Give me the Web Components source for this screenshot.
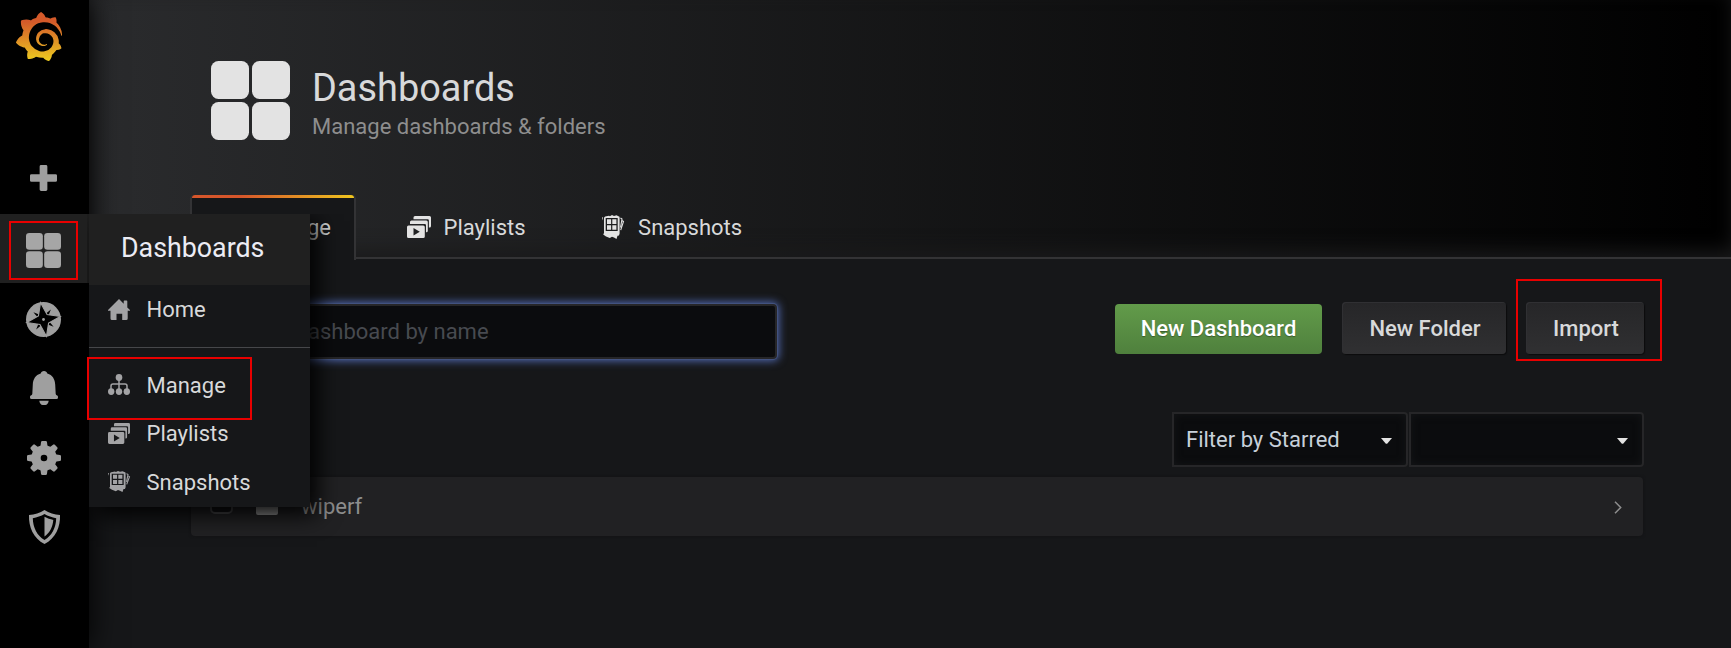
<!DOCTYPE html>
<html lang="en">
<head>
<meta charset="utf-8">
<title>Dashboards</title>
<style>
html,body{margin:0;height:100%;background:#161719;overflow:hidden}
body{font:22px/1.5 Roboto,sans-serif;color:#d8d9da}
</style>
</head>
<body>
<app-shell></app-shell>
<script>
const define=(name,html)=>{
  const t=document.createElement('template');t.innerHTML=html;
  customElements.define(name,class extends HTMLElement{
    connectedCallback(){
      if(this.shadowRoot)return;
      this.attachShadow({mode:'open'}).append(t.content.cloneNode(true));
    }
  });
};

const poly=(n,f)=>Array.from({length:n},(_,i)=>f(i).map(v=>v.toFixed(2)).join(',')).join(' ');
const polar=(c,r,a)=>[c+r*Math.sin(a*Math.PI/180),c-r*Math.cos(a*Math.PI/180)];
const star=(r,s,rot)=>poly(8,i=>polar(17.5,i%2?s:r,i*45+rot));
const teeth=Array.from({length:8},(_,i)=>`<path transform="rotate(${i*45} 17 17)" d="M11.500 7 13.600 4.600 14 1.200Q14.100 0 15.300 0h3.400q1.200 0 1.300 1.200l.4 3.400L22.500 7z"/>`).join('');
const grafana="M23.02 10.59a8.578 8.578 0 0 0-.862-3.034 8.911 8.911 0 0 0-1.789-2.445c.337-1.342-.413-2.505-.413-2.505-1.292-.08-2.113.4-2.416.62-.052-.02-.102-.044-.154-.064-.22-.089-.446-.172-.677-.247-.231-.073-.47-.14-.711-.197a9.867 9.867 0 0 0-.875-.161C14.557.753 12.94 0 12.94 0c-1.804 1.145-2.147 2.744-2.147 2.744l-.018.093c-.098.029-.2.057-.298.088-.138.042-.275.094-.413.143-.138.055-.275.107-.41.166a8.869 8.869 0 0 0-1.557.87l-.063-.029c-2.497-.955-4.716.195-4.716.195-.203 2.658.996 4.33 1.235 4.636a11.608 11.608 0 0 0-.607 2.635C1.636 12.677.953 15.014.953 15.014c1.926 2.214 4.171 2.351 4.171 2.351.003-.002.006-.002.006-.005.285.509.615.994.986 1.446.156.19.32.371.488.548-.704 2.009.099 3.68.099 3.68 2.144.08 3.553-.937 3.849-1.173a9.784 9.784 0 0 0 3.164.501h.08l.055-.003.107-.002.103-.005.003.002c1.01 1.44 2.788 1.646 2.788 1.646 1.264-1.332 1.337-2.653 1.337-2.94v-.058c0-.02-.003-.039-.003-.06.265-.187.52-.387.758-.6a7.875 7.875 0 0 0 1.415-1.7c1.43.083 2.437-.885 2.437-.885-.236-1.49-1.085-2.216-1.264-2.354l-.018-.013-.016-.013a.217.217 0 0 1-.031-.02c.008-.092.016-.18.02-.27.011-.162.016-.323.016-.48v-.253l-.005-.098-.008-.135a1.891 1.891 0 0 0-.01-.13c-.003-.042-.008-.083-.013-.125l-.016-.124-.018-.122a6.215 6.215 0 0 0-2.032-3.73 6.015 6.015 0 0 0-3.222-1.46 6.292 6.292 0 0 0-.85-.048l-.107.002h-.063l-.044.003-.104.008a4.777 4.777 0 0 0-3.335 1.695c-.332.4-.592.84-.768 1.297a4.594 4.594 0 0 0-.312 1.817l.003.091c.005.055.007.11.013.164a3.615 3.615 0 0 0 .698 1.82 3.53 3.53 0 0 0 1.827 1.282c.33.098.66.14.971.137.039 0 .078 0 .114-.002l.063-.003c.02 0 .041-.003.062-.003.034-.002.065-.007.099-.01.007 0 .018-.003.028-.003l.031-.005.06-.008a1.18 1.18 0 0 0 .112-.02c.036-.008.072-.013.109-.024a2.634 2.634 0 0 0 .914-.415c.028-.02.056-.041.085-.065a.248.248 0 0 0 .039-.35.244.244 0 0 0-.309-.06l-.078.042c-.09.044-.184.083-.283.116a2.476 2.476 0 0 1-.475.096c-.028.003-.054.006-.083.006l-.083.002c-.026 0-.054 0-.08-.002l-.102-.006h-.012l-.024.006c-.016-.003-.031-.003-.044-.006-.031-.002-.06-.007-.091-.01a2.59 2.59 0 0 1-.724-.213 2.557 2.557 0 0 1-.667-.438 2.52 2.52 0 0 1-.805-1.475 2.306 2.306 0 0 1-.029-.444l.006-.122v-.023l.002-.031c.003-.021.003-.04.005-.06a3.163 3.163 0 0 1 1.352-2.29 3.12 3.12 0 0 1 .937-.43 2.946 2.946 0 0 1 .776-.101h.06l.07.002.045.003h.026l.07.005a4.041 4.041 0 0 1 1.635.49 3.94 3.94 0 0 1 1.602 1.662 3.77 3.77 0 0 1 .397 1.414l.005.076.003.075c.002.026.002.05.002.075 0 .024.003.052 0 .07v.065l-.002.073-.008.174a6.195 6.195 0 0 1-.08.639 5.1 5.1 0 0 1-.267.927 5.31 5.31 0 0 1-.624 1.13 5.052 5.052 0 0 1-3.237 2.014 4.82 4.82 0 0 1-.649.066l-.039.003h-.287a6.607 6.607 0 0 1-1.716-.265 6.776 6.776 0 0 1-3.4-2.274 6.75 6.75 0 0 1-.746-1.15 6.616 6.616 0 0 1-.714-2.596l-.005-.083-.002-.02v-.056l-.003-.073v-.096l-.003-.104v-.07l.003-.163c.008-.22.026-.45.054-.678a8.707 8.707 0 0 1 .28-1.355c.128-.444.286-.872.473-1.277a7.04 7.04 0 0 1 1.456-2.1 5.925 5.925 0 0 1 .953-.763c.169-.111.343-.213.524-.306.089-.05.182-.091.273-.135.047-.02.093-.042.138-.062a7.177 7.177 0 0 1 .714-.267l.145-.045c.049-.015.098-.026.148-.041.098-.029.197-.052.296-.076.049-.013.1-.02.15-.033l.15-.032.151-.028.076-.013.075-.01.153-.024c.057-.01.114-.013.171-.023l.169-.021c.036-.003.073-.008.106-.01l.073-.008.036-.003.042-.002c.057-.003.114-.008.171-.01l.086-.006h.023l.037-.003.145-.007a7.999 7.999 0 0 1 1.708.125 7.917 7.917 0 0 1 2.048.68 8.253 8.253 0 0 1 1.672 1.09l.09.077.089.078c.06.052.114.107.171.159.057.052.112.106.166.16.052.055.107.107.159.164a8.671 8.671 0 0 1 1.41 1.978c.012.026.028.052.04.078l.04.078.075.156c.023.051.05.1.07.153l.065.15a8.848 8.848 0 0 1 .45 1.34.19.19 0 0 0 .201.142.186.186 0 0 0 .172-.184c.01-.246.002-.532-.024-.856z";

/* name: [viewBox width, viewBox height, markup] */
const ICONS={
  grafana:[24,24,`<defs><linearGradient id="g" x1="0" y1="0" x2="0" y2="1"><stop offset=".2" stop-color="#d45a2a"/><stop offset="1" stop-color="#eccb20"/></linearGradient></defs><path fill="url(#g)" d="${grafana}"/>`],
  plus:[28,27,'<path d="M11.5 0h5q1.5 0 1.5 1.5V9.500h8.500q1.500 0 1.500 1.500v5q0 1.500-1.500 1.500H18v8q0 1.500-1.500 1.500h-5q-1.500 0-1.500-1.500v-8H1.500Q0 17.500 0 16v-5Q0 9.500 1.500 9.500H10V1.500Q10 0 11.500 0z"/>'],
  apps:[79,79,'<rect width="38" height="38" rx="7.500"/><rect x="41" width="38" height="38" rx="7.500"/><rect y="41" width="38" height="38" rx="7.500"/><rect x="41" y="41" width="38" height="38" rx="7.500"/>'],
  compass:[35,35,`<circle cx="17.5" cy="17.500" r="17.500"/><g fill="#000"><polygon points="${star(12.5,3.6,36)}"/><polygon stroke="currentColor" stroke-width="1.100" points="${star(17,6.200,-10)}"/></g><circle cx="17.500" cy="17.500" r="1.400"/>`],
  bell:[28,34,'<path d="M14 0c1.700 0 3 1.200 3.300 2.600C22.500 4 25 8.500 25.200 13.500l.5 9.500q.3 1.200 1.500 1.400.8.400.8 1.500v.6q0 1.500-1.500 1.500h-25Q0 28 0 26.500v-.6q0-1.100.8-1.500 1.200-.2 1.500-1.400l.5-9.500C3 8.500 5.500 4 10.700 2.600 11 1.200 12.300 0 14 0zM9.300 29.700h9.400c-.3 2.600-1.700 4.300-3.400 4.300h-2.600c-1.700 0-3.100-1.700-3.400-4.300z"/>'],
  gear:[34,34,`<mask id="m"><rect width="34" height="34" fill="#fff"/><circle cx="17" cy="17" r="3.300" fill="#000"/></mask><g mask="url(#m)"><circle cx="17" cy="17" r="12.700"/>${teeth}</g>`],
  shield:[31,34,'<path fill-rule="evenodd" d="M15.500 0C20 3 25.500 4.600 31 5c.5 12-4.500 23.500-15.500 29C4.500 28.500-.5 17 0 5 5.500 4.600 11 3 15.500 0zM3.800 8.200C4 17.500 8 25.500 15.500 30 23 25.500 27 17.500 27.200 8.200 23 7.500 19 6.100 15.500 4.100 12 6.100 8 7.500 3.800 8.200z"/><path d="M15.500 6.800c2.800 1.500 5.700 2.500 8.800 3.100-.6 7-3.400 12.700-8.800 16.600z"/>'],
  home:[22,21,'<path d="M11 0 15.700 4.700V2.200q0-.7.700-.7h2.200q.7 0 .7.700v6.200L22 11v.800h-2.300V19.500q0 1.500-1.500 1.500h-4v-6.300H8.500V21H4q-1.500 0-1.500-1.500V11.800H0V11z"/>'],
  sitemap:[22,20,'<path fill="none" stroke="currentColor" stroke-width="1.500" d="M11 4v12M3 15v-3.500q0-2 2-2h12q2 0 2 2V15"/><circle cx="11" cy="3.300" r="3.300"/><circle cx="3.200" cy="16.700" r="3.200"/><circle cx="11" cy="16.700" r="3.200"/><circle cx="18.800" cy="16.700" r="3.200"/>'],
  playlist:[24,22,'<path d="M6.500 1.500Q6.500 0 8 0h14.500Q24 0 24 1.500V10q0 1.500-1.500 1.500h-.6V4.500q0-1.200-1.200-1.200H6.500zM3 6q0-1.500 1.500-1.500h14.800q1.500 0 1.500 1.500v8.800q0 1.500-1.500 1.500h-.3V9.200Q19 8 17.800 8H3z"/><path fill-rule="evenodd" d="M1.500 9.500h14.800q1.500 0 1.500 1.500v9.500q0 1.500-1.500 1.500H1.500Q0 22 0 20.500V11q0-1.500 1.500-1.500zM6.500 12v7.500l6.300-3.700z"/>'],
  snapshot:[22,24,'<path fill-rule="evenodd" d="M3.200 1.500 7 .7l.9.500L10 0l2 .9L14.500.2l2.500 1.300q.6.200.6 1V18.500l-.6 2-1.500.2-1 3.300-2.500-1.500-2-.8-2.200 1.300L4 21.500l-2.800-2 .8-1.500V3q0-1 1.200-1.500zM3.700 3v13h12V3z"/><path d="M5 4.300h4.100v4.600H5zM10.300 4.300h4.100v4.600h-4.100zM5 10.200h4.100v4.600H5zM10.300 10.200h4.100v4.600h-4.100zM0 2.500l1-.3v3.300z"/><path fill="none" stroke="currentColor" stroke-width="1.100" d="M18.500 3 20 4l-1.500 8.500M20 5.500l1.500 1-2.800 8.700"/>'],
  folder:[22,20,'<path d="M2 2h6l2 2.500h10q2 0 2 2V18q0 2-2 2H2q-2 0-2-2V4q0-2 2-2z"/>'],
  chevron:[8,13,'<path fill="none" stroke="currentColor" stroke-width="1.500" d="M1 .8 6.700 6.500 1 12.200"/>'],
  caret:[10,6,'<path d="M0 0h10L5.800 5.400q-.8.900-1.600 0z"/>']
};
customElements.define('ui-icon',class extends HTMLElement{
  connectedCallback(){
    const [w,h,body]=ICONS[this.getAttribute('name')];
    if(!this.shadowRoot)this.attachShadow({mode:'open'});
    this.shadowRoot.innerHTML=`<style>:host{display:block;flex:none}svg{display:block;width:100%;height:100%;overflow:visible}</style><svg viewBox="0 0 ${w} ${h}" fill="currentColor" preserveAspectRatio="none">${body}</svg>`;
  }
});

define('red-mark',`<style>:host{position:absolute;box-sizing:border-box;border:2px solid #e80000;pointer-events:none;z-index:9}</style>`);

define('menu-item',`<style>
:host{display:flex;align-items:center;height:48.5px;padding-left:19px;line-height:32px;color:#d8d9da}
::slotted(ui-icon){width:22px;height:21px;margin-right:16.500px;color:#a3a3a5}
span{padding-top:2px}
</style><slot name="icon"></slot><span><slot></slot></span>`);

define('side-menu',`<style>
:host{position:absolute;left:89px;top:0;width:221px;height:293px;background:#161719;box-shadow:7px 7px 22px #000;clip-path:inset(0 -40px -40px -2px);z-index:4}
header{height:71px;box-sizing:border-box;padding-left:32px;background:#202020;font-size:26.800px;line-height:69px;color:#ececf4}
hr{height:1px;margin:13px 0;border:0;background:#46474a}
</style>
<header>Dashboards</header>
<menu-item><ui-icon slot="icon" name="home"></ui-icon>Home</menu-item><hr>
<menu-item><ui-icon slot="icon" name="sitemap"></ui-icon>Manage</menu-item>
<menu-item><ui-icon slot="icon" name="playlist"></ui-icon>Playlists</menu-item>
<menu-item><ui-icon slot="icon" name="snapshot"></ui-icon>Snapshots</menu-item>
<red-mark style="left:-2px;top:143px;width:165px;height:63px"></red-mark>`);

define('side-bar',`<style>
:host{display:flex;flex-direction:column;position:relative;z-index:3;width:89px;flex:none;background:#000;box-shadow:0 0 29px #000;color:#9f9f9f}
.logo{width:50px;height:49px;margin:12px 0 84px 14px}
.item{position:relative;height:69.200px;display:flex;align-items:center;justify-content:center;padding:3px 1px 0 0;box-sizing:border-box}
.first{padding:0 2px 4px 0;height:69px}
.active{background:#202020;color:#a6a6a6;z-index:2;padding-right:2px}
</style>
<ui-icon class="logo" name="grafana"></ui-icon>
<div class="item first"><ui-icon name="plus" style="width:27px;height:26px"></ui-icon></div>
<div class="item active"><ui-icon name="apps" style="width:35px;height:35px"></ui-icon><side-menu></side-menu>
<red-mark style="left:9px;top:7px;width:69px;height:59px"></red-mark></div>
<div class="item" style="padding-right:2px"><ui-icon name="compass" style="width:35px;height:35px"></ui-icon></div>
<div class="item"><ui-icon name="bell" style="width:28px;height:34px"></ui-icon></div>
<div class="item"><ui-icon name="gear" style="width:34px;height:34px"></ui-icon></div>
<div class="item"><ui-icon name="shield" style="width:31px;height:34px"></ui-icon></div>`);

define('nav-tab',`<style>
:host{display:flex;align-items:center;box-sizing:border-box;height:63px;padding:0 25px 0;margin-left:26px;line-height:32px}
:host([active]){position:relative;width:166px;margin:0 0 -2px;height:65px;padding:0 23px 2px 0;justify-content:flex-end;background:#161719;border:solid #333335;border-width:0 2px;border-radius:4px 4px 0 0}
:host([active])::before{content:"";position:absolute;left:0;right:0;top:0;height:3px;border-radius:3px 3px 0 0;background:linear-gradient(90deg,#d6562b 30%,#efc41f 99%)}
span{padding-top:2px}
</style><slot name="icon"></slot><span><slot></slot></span>`);

define('page-header',`<style>
:host{display:block;box-sizing:border-box;height:259px;padding:61px 87px 0 101px;background:linear-gradient(90deg,#2a2b2d,#000);box-shadow:inset 0 -9px 19px -3px #1a1a1b;border-bottom:2px solid #333335}
.top{display:flex;height:79px;margin-left:21px}
.top ui-icon{width:79px;height:79px;margin-right:22px;color:#e3e3e3}
h1{margin:4px 0 0;font-weight:400;font-size:37.9px;line-height:46px}
p{margin:0;line-height:32px;color:#8e8e8e}
nav{display:flex;margin-top:55px}
nav ui-icon{width:24px;height:22px;margin-right:12.500px;color:#e3e3e3}
</style>
<div class="top"><ui-icon name="apps"></ui-icon><div><h1>Dashboards</h1><p>Manage dashboards &amp; folders</p></div></div>
<nav><nav-tab active><ui-icon slot="icon" name="sitemap"></ui-icon>Manage</nav-tab>
<nav-tab><ui-icon slot="icon" name="playlist"></ui-icon>Playlists</nav-tab>
<nav-tab><ui-icon slot="icon" name="snapshot" style="width:22px;height:24px;margin-right:14.500px"></ui-icon>Snapshots</nav-tab></nav>`);

define('ui-button',`<style>
:host{display:flex;align-items:center;justify-content:center;box-sizing:border-box;height:52px;padding:0 0 0 2px;font-weight:500;border-radius:4px;background:linear-gradient(#262628,#303032);box-shadow:inset 1px 1px 0 #303033,1px 1px 1px #0c0c0d;color:#d8d9da}
:host([primary]){height:50px;padding:0 0 2px;background:linear-gradient(#629b4a,#4f803d);box-shadow:none;color:#fff;text-shadow:0 1px 1px #0005}
</style><slot></slot>`);

define('search-box',`<style>
:host{display:flex;align-items:center;box-sizing:border-box;width:586px;height:55px;padding:0 0 0 53px;background:#0b0c0e;border:2px solid #262628;border-radius:4px;box-shadow:0 0 0 1px #42527f,0 0 9px 2px #5069b0;line-height:32px;color:#474a50}
</style><slot></slot>`);

define('filter-select',`<style>
:host{display:flex;align-items:center;justify-content:space-between;box-sizing:border-box;width:235px;height:55px;padding:0 14px 0 12px;background:#0b0c0e;border:2px solid #262628;border-radius:0 4px 4px 0;box-shadow:inset 0 0 9px #151618;line-height:32px;color:#c7d0d9}
ui-icon{width:11px;height:6px;color:#e3e3e3;margin-top:2px}
</style><span><slot></slot></span><ui-icon name="caret"></ui-icon>`);

define('folder-row',`<style>
:host{display:flex;align-items:center;box-sizing:border-box;height:59px;padding:0 21px 0 19px;background:#212123;border-radius:4px;box-shadow:0 0 3px #121213;color:#8e8e8e}
i{box-sizing:border-box;width:23px;height:23px;margin-bottom:9px;border:2px solid #464648;border-radius:5px;background:#121214}
.f{width:22px;height:20px;margin:0 23px 3px 23px;color:#8e8e8e}
span{flex:1;margin-top:-1px}
.c{width:8px;height:13px;margin-top:2px}
</style><i></i><ui-icon class="f" name="folder"></ui-icon><span><slot></slot></span><ui-icon class="c" name="chevron"></ui-icon>`);

define('dashboard-list',`<style>
:host{display:block;padding:43px 88px 0 102px}
.bar{display:flex;align-items:flex-end;height:57px}
.buttons{position:relative;display:flex;align-items:flex-end;margin:0 -1px 5px auto}
.filters{display:flex;justify-content:flex-end;gap:1px;margin:53px -1px 10px 0}
.starred{width:236px}
</style>
<div class="bar"><search-box>Find Dashboard by name</search-box>
<div class="buttons"><ui-button primary style="width:207px">New Dashboard</ui-button><ui-button style="width:164px;margin-left:20px">New Folder</ui-button><ui-button style="width:118px;margin-left:20px">Import</ui-button>
<red-mark style="right:-18px;top:-23px;width:146px;height:82px"></red-mark></div></div>
<div class="filters"><filter-select class="starred">Filter by Starred</filter-select><filter-select></filter-select></div>
<folder-row>wiperf</folder-row>`);

define('app-shell',`<style>
:host{display:flex;height:100vh;overflow:hidden;background:#161719}
main{flex:1;min-width:0}
</style><side-bar></side-bar><main><page-header></page-header><dashboard-list></dashboard-list></main>`);
</script>
</body>
</html>
